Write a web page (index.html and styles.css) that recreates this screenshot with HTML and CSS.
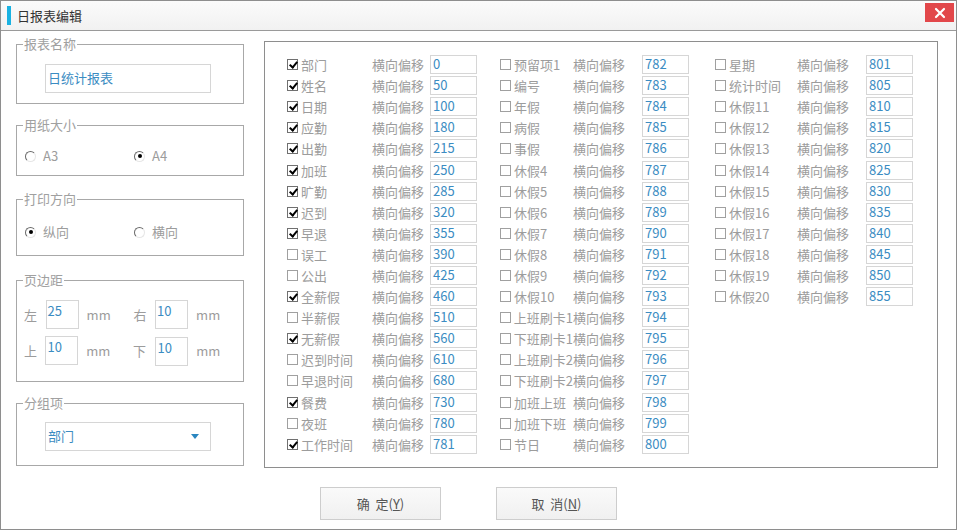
FILE: index.html
```html
<!DOCTYPE html>
<html lang="zh-CN">
<head>
  <meta charset="UTF-8" />
  <title>日报表编辑</title>
  <link rel="stylesheet" href="styles.css">
</head>
<body>
  <div class="window">
    <!-- title bar -->
    <div class="titlebar">
      <span class="accent"></span>
      <span class="title">日报表编辑</span>
      <span class="close">
        <svg width="12" height="12" viewBox="0 0 12 12"><path d="M2 2 L10 10 M10 2 L2 10" stroke="#fff" stroke-width="2.2" stroke-linecap="round"/></svg>
      </span>
    </div>

    <div class="main">
      <!-- left settings -->
      <div class="side">
        <div class="group g-name">
          <span class="legend">报表名称</span>
          <div class="field wide">日统计报表</div>
        </div>

        <div class="group g-paper">
          <span class="legend">用纸大小</span>
          <div class="radios">
            <span class="opt"><span class="radio"></span>A3</span>
            <span class="opt"><span class="radio on"></span>A4</span>
          </div>
        </div>

        <div class="group g-dir">
          <span class="legend">打印方向</span>
          <div class="radios">
            <span class="opt"><span class="radio on"></span>纵向</span>
            <span class="opt"><span class="radio"></span>横向</span>
          </div>
        </div>

        <div class="group g-margin">
          <span class="legend">页边距</span>
          <div class="mrow">
            <span class="mlabel">左</span><span class="field small">25</span><span class="unit">mm</span>
            <span class="mlabel">右</span><span class="field small">10</span><span class="unit">mm</span>
          </div>
          <div class="mrow">
            <span class="mlabel">上</span><span class="field small">10</span><span class="unit">mm</span>
            <span class="mlabel">下</span><span class="field small shift">10</span><span class="unit">mm</span>
          </div>
        </div>

        <div class="group g-group">
          <span class="legend">分组项</span>
          <div class="field wide select">部门<span class="caret"></span></div>
        </div>
      </div>

      <!-- column offsets -->
      <div class="panel">
        <div class="col col-1">
          <div class="row"><span class="chk"><span class="box on"></span>部门</span><span class="tag">横向偏移</span><span class="num">0</span></div>
          <div class="row"><span class="chk"><span class="box on"></span>姓名</span><span class="tag">横向偏移</span><span class="num">50</span></div>
          <div class="row"><span class="chk"><span class="box on"></span>日期</span><span class="tag">横向偏移</span><span class="num">100</span></div>
          <div class="row"><span class="chk"><span class="box on"></span>应勤</span><span class="tag">横向偏移</span><span class="num">180</span></div>
          <div class="row"><span class="chk"><span class="box on"></span>出勤</span><span class="tag">横向偏移</span><span class="num">215</span></div>
          <div class="row"><span class="chk"><span class="box on"></span>加班</span><span class="tag">横向偏移</span><span class="num">250</span></div>
          <div class="row"><span class="chk"><span class="box on"></span>旷勤</span><span class="tag">横向偏移</span><span class="num">285</span></div>
          <div class="row"><span class="chk"><span class="box on"></span>迟到</span><span class="tag">横向偏移</span><span class="num">320</span></div>
          <div class="row"><span class="chk"><span class="box on"></span>早退</span><span class="tag">横向偏移</span><span class="num">355</span></div>
          <div class="row"><span class="chk"><span class="box"></span>误工</span><span class="tag">横向偏移</span><span class="num">390</span></div>
          <div class="row"><span class="chk"><span class="box"></span>公出</span><span class="tag">横向偏移</span><span class="num">425</span></div>
          <div class="row"><span class="chk"><span class="box on"></span>全薪假</span><span class="tag">横向偏移</span><span class="num">460</span></div>
          <div class="row"><span class="chk"><span class="box"></span>半薪假</span><span class="tag">横向偏移</span><span class="num">510</span></div>
          <div class="row"><span class="chk"><span class="box on"></span>无薪假</span><span class="tag">横向偏移</span><span class="num">560</span></div>
          <div class="row"><span class="chk"><span class="box"></span>迟到时间</span><span class="tag">横向偏移</span><span class="num">610</span></div>
          <div class="row"><span class="chk"><span class="box"></span>早退时间</span><span class="tag">横向偏移</span><span class="num">680</span></div>
          <div class="row"><span class="chk"><span class="box on"></span>餐费</span><span class="tag">横向偏移</span><span class="num">730</span></div>
          <div class="row"><span class="chk"><span class="box"></span>夜班</span><span class="tag">横向偏移</span><span class="num">780</span></div>
          <div class="row"><span class="chk"><span class="box on"></span>工作时间</span><span class="tag">横向偏移</span><span class="num">781</span></div>
        </div>

        <div class="col col-2">
          <div class="row"><span class="chk"><span class="box"></span>预留项1</span><span class="tag">横向偏移</span><span class="num">782</span></div>
          <div class="row"><span class="chk"><span class="box"></span>编号</span><span class="tag">横向偏移</span><span class="num">783</span></div>
          <div class="row"><span class="chk"><span class="box"></span>年假</span><span class="tag">横向偏移</span><span class="num">784</span></div>
          <div class="row"><span class="chk"><span class="box"></span>病假</span><span class="tag">横向偏移</span><span class="num">785</span></div>
          <div class="row"><span class="chk"><span class="box"></span>事假</span><span class="tag">横向偏移</span><span class="num">786</span></div>
          <div class="row"><span class="chk"><span class="box"></span>休假4</span><span class="tag">横向偏移</span><span class="num">787</span></div>
          <div class="row"><span class="chk"><span class="box"></span>休假5</span><span class="tag">横向偏移</span><span class="num">788</span></div>
          <div class="row"><span class="chk"><span class="box"></span>休假6</span><span class="tag">横向偏移</span><span class="num">789</span></div>
          <div class="row"><span class="chk"><span class="box"></span>休假7</span><span class="tag">横向偏移</span><span class="num">790</span></div>
          <div class="row"><span class="chk"><span class="box"></span>休假8</span><span class="tag">横向偏移</span><span class="num">791</span></div>
          <div class="row"><span class="chk"><span class="box"></span>休假9</span><span class="tag">横向偏移</span><span class="num">792</span></div>
          <div class="row"><span class="chk"><span class="box"></span>休假10</span><span class="tag">横向偏移</span><span class="num">793</span></div>
          <div class="row"><span class="chk"><span class="box"></span>上班刷卡1</span><span class="tag">横向偏移</span><span class="num">794</span></div>
          <div class="row"><span class="chk"><span class="box"></span>下班刷卡1</span><span class="tag">横向偏移</span><span class="num">795</span></div>
          <div class="row"><span class="chk"><span class="box"></span>上班刷卡2</span><span class="tag">横向偏移</span><span class="num">796</span></div>
          <div class="row"><span class="chk"><span class="box"></span>下班刷卡2</span><span class="tag">横向偏移</span><span class="num">797</span></div>
          <div class="row"><span class="chk"><span class="box"></span>加班上班</span><span class="tag">横向偏移</span><span class="num">798</span></div>
          <div class="row"><span class="chk"><span class="box"></span>加班下班</span><span class="tag">横向偏移</span><span class="num">799</span></div>
          <div class="row"><span class="chk"><span class="box"></span>节日</span><span class="tag">横向偏移</span><span class="num">800</span></div>
        </div>

        <div class="col col-3">
          <div class="row"><span class="chk"><span class="box"></span>星期</span><span class="tag">横向偏移</span><span class="num">801</span></div>
          <div class="row"><span class="chk"><span class="box"></span>统计时间</span><span class="tag">横向偏移</span><span class="num">805</span></div>
          <div class="row"><span class="chk"><span class="box"></span>休假11</span><span class="tag">横向偏移</span><span class="num">810</span></div>
          <div class="row"><span class="chk"><span class="box"></span>休假12</span><span class="tag">横向偏移</span><span class="num">815</span></div>
          <div class="row"><span class="chk"><span class="box"></span>休假13</span><span class="tag">横向偏移</span><span class="num">820</span></div>
          <div class="row"><span class="chk"><span class="box"></span>休假14</span><span class="tag">横向偏移</span><span class="num">825</span></div>
          <div class="row"><span class="chk"><span class="box"></span>休假15</span><span class="tag">横向偏移</span><span class="num">830</span></div>
          <div class="row"><span class="chk"><span class="box"></span>休假16</span><span class="tag">横向偏移</span><span class="num">835</span></div>
          <div class="row"><span class="chk"><span class="box"></span>休假17</span><span class="tag">横向偏移</span><span class="num">840</span></div>
          <div class="row"><span class="chk"><span class="box"></span>休假18</span><span class="tag">横向偏移</span><span class="num">845</span></div>
          <div class="row"><span class="chk"><span class="box"></span>休假19</span><span class="tag">横向偏移</span><span class="num">850</span></div>
          <div class="row"><span class="chk"><span class="box"></span>休假20</span><span class="tag">横向偏移</span><span class="num">855</span></div>
        </div>
      </div>
    </div>

    <!-- dialog buttons -->
    <div class="buttons">
      <button class="btn">确&nbsp;&nbsp;定(<u>Y</u>)</button>
      <button class="btn">取&nbsp;&nbsp;消(<u>N</u>)</button>
    </div>
  </div>
</body>
</html>
```

FILE: styles.css
```css
:root {
  --frame: #8e8e8e;
  --line: #a8a8a8;
  --field: #d6d6d6;
  --label: #9c9c9c;
  --value: #3b8cc2;
}

body {
  margin: 0;
  background: #fff;
  font-family: "Noto Sans CJK SC", "Noto Sans", sans-serif;
  font-size: 13px;
  color: var(--label);
}

.window {
  width: 957px;
  height: 530px;
  box-sizing: border-box;
  border: 1px solid var(--frame);
  display: flex;
  flex-direction: column;
}

/* Title bar */
.titlebar {
  height: 29px;
  flex: none;
  border-bottom: 1px solid #9a9a9a;
  background: linear-gradient(#fbfbfb, #f1f1f1);
  display: flex;
  align-items: center;
  position: relative;
}
.accent {
  width: 4px;
  height: 19px;
  margin-left: 6px;
  background: #19b2e2;
}
.title {
  margin-left: 6px;
  color: #333;
  font-size: 13px;
  line-height: 1;
}
.close {
  position: absolute;
  right: 2px;
  top: 2px;
  width: 29px;
  height: 19px;
  background: #e2474a;
  display: flex;
  align-items: center;
  justify-content: center;
}

.main {
  display: flex;
  gap: 20px;
  padding: 0 0 0 15px;
}

/* Left column groups */
.side {
  width: 228px;
  padding-top: 13px;
}
.group {
  border: 1px solid var(--line);
  position: relative;
  box-sizing: border-box;
}
.legend {
  position: absolute;
  top: -10px;
  left: 6px;
  padding: 0 1px;
  background: #fff;
  color: #a0a0a0;
  line-height: 18px;
}
.g-name { height: 60px; padding: 19px 0 0 28px; }
.g-paper { height: 51px; margin-top: 21px; padding: 22px 0 0 8px; }
.g-dir { height: 57px; margin-top: 23px; padding: 24px 0 0 8px; }
.g-margin { height: 102px; margin-top: 24px; padding: 19px 0 0 7px; }
.g-group { height: 63px; margin-top: 21px; padding: 18px 0 0 28px; }

.field {
  box-sizing: border-box;
  border: 1px solid var(--field);
  color: var(--value);
  background: #fff;
}
.field.wide {
  width: 166px;
  height: 29px;
  line-height: 25px;
  padding-left: 2px;
}
.field.small {
  width: 35px;
  height: 29px;
  line-height: 20px;
  padding-left: 1px;
}
.field.shift { margin-left: 1px; margin-top: 1px; }

.select {
  position: relative;
}
.caret {
  position: absolute;
  right: 11px;
  top: 11px;
  border-left: 4.5px solid transparent;
  border-right: 4.5px solid transparent;
  border-top: 5px solid #2a86c0;
}

.radios {
  display: flex;
  align-items: center;
}
.opt {
  width: 109px;
  display: flex;
  align-items: center;
  line-height: 16px;
}
.radio {
  width: 11px;
  height: 11px;
  box-sizing: border-box;
  border-radius: 50%;
  border: 1px solid;
  border-color: #6a6a6a #e6e6e6 #e6e6e6 #6a6a6a;
  margin-right: 7px;
  position: relative;
}
.radio.on::after {
  content: "";
  position: absolute;
  left: 2.5px;
  top: 2.5px;
  width: 4px;
  height: 4px;
  border-radius: 50%;
  background: #000;
}

.mrow {
  display: flex;
  align-items: center;
  height: 29px;
  margin-bottom: 7px;
}
.mlabel { width: 23px; }
.unit { width: 50px; padding-left: 8px; }

/* Right panel */
.panel {
  width: 674px;
  height: 427px;
  box-sizing: border-box;
  margin-top: 10px;
  border: 1px solid var(--frame);
  display: flex;
  padding: 12px 0 0 22px;
}
.col { display: flex; flex-direction: column; }
.col-1 { width: 213px; }
.col-2 { width: 215px; }
.row {
  height: 21.1px;
  display: flex;
  align-items: center;
  white-space: nowrap;
}
.chk {
  display: flex;
  align-items: center;
  flex: none;
}
.col-1 .chk { width: 85px; }
.col-1 .tag { width: 58px; }
.col-2 .chk { width: 73px; }
.col-2 .tag { width: 69px; }
.col-3 .chk { width: 82px; }
.col-3 .tag { width: 69px; }
.tag { flex: none; }

.box {
  width: 11px;
  height: 11px;
  box-sizing: border-box;
  border: 1px solid #a0a0a0;
  margin-right: 3px;
  position: relative;
}
.box.on {
  border-color: #707070;
}
.box.on::after {
  content: "";
  position: absolute;
  left: 3px;
  top: 0px;
  width: 3px;
  height: 6px;
  border: solid #000;
  border-width: 0 2px 2px 0;
  transform: rotate(40deg);
}
.num {
  width: 47px;
  height: 19px;
  box-sizing: border-box;
  border: 1px solid var(--field);
  color: var(--value);
  line-height: 15px;
  padding-left: 2px;
}

/* Buttons */
.buttons {
  display: flex;
  gap: 55px;
  padding: 19px 0 0 319px;
}
.btn {
  width: 121px;
  height: 33px;
  border: 1px solid #cdcdcd;
  background: linear-gradient(#fafafa, #f0f0f0);
  font-family: "Noto Sans CJK SC", "Noto Sans", sans-serif;
  font-size: 13px;
  color: #555;
  padding: 0;
}
.btn u { text-underline-offset: 1px; }
```
